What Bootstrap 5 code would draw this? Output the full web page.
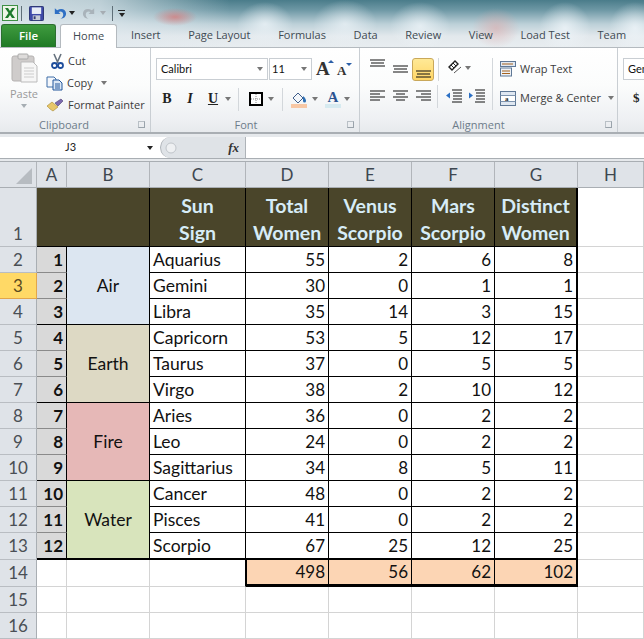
<!DOCTYPE html>
<html lang="en">
<head>
<meta charset="utf-8">
<title>Excel – Sun signs</title>
<link href="https://cdn.jsdelivr.net/npm/bootstrap@5.3.0/dist/css/bootstrap.min.css" rel="stylesheet">
<style>
html,body{width:644px;height:639px;overflow:hidden;background:#fff}
body{font-family:"Open Sans","Liberation Sans",sans-serif;font-size:11px;color:#3b3b3b}
svg{flex:none}
.xl-top{height:47px;background:
 radial-gradient(ellipse 22px 9px at 175px 17px,rgba(214,120,120,.75),transparent),
 radial-gradient(ellipse 28px 22px at 265px 24px,rgba(240,246,250,.75),transparent),
 radial-gradient(ellipse 32px 24px at 345px 24px,rgba(240,246,250,.7),transparent),
 radial-gradient(ellipse 30px 24px at 420px 26px,rgba(240,246,250,.75),transparent),
 radial-gradient(ellipse 24px 20px at 496px 28px,rgba(220,170,170,.6),transparent),
 radial-gradient(ellipse 26px 26px at 565px 28px,rgba(240,246,250,.8),transparent),
 radial-gradient(ellipse 26px 26px at 635px 28px,rgba(240,246,250,.8),transparent),
 linear-gradient(90deg,rgba(225,233,238,.85) 0,rgba(225,233,238,.75) 100px,transparent 230px),
 linear-gradient(180deg,#4a7c8a 0,#6e98a5 10px,#bcd0d8 24px,#e2e8ec 36px,#e8edf0 47px)}
.xl-qat{height:24px;padding:2px 0 0 2px}
.xl-qsep{width:1px;height:15px;background:#5f6f78;flex:none}
.xl-drop{width:0;height:0;border-left:3.5px solid transparent;border-right:3.5px solid transparent;border-top:4px solid #777;flex:none}
.xl-drop-k{border-top-color:#222}
.xl-drop-l{border-top-color:#a6adb3}
.xl-cust{width:7px;height:1px;background:#222;margin-bottom:2px}
.l1{margin-left:1px}.l2{margin-left:2px}.l3{margin-left:3px}.l4{margin-left:4px}.l5{margin-left:5px}.l6{margin-left:6px}.l7{margin-left:7px}.l8{margin-left:8px}.l9{margin-left:9px}.l10{margin-left:10px}
.xl-tabs{height:23px}
.xl-file{width:55px;margin-left:1px;height:23px;line-height:22px;text-align:center;color:#fff;font-weight:600;font-size:11.5px;background:linear-gradient(180deg,#3f9b3f,#1f7a25);border-radius:3px 3px 0 0;border:1px solid #2c6f30;border-bottom:0}
.xl-tab{padding:0 13.8px;line-height:22px;font-size:11px;color:#3f4a52;white-space:nowrap}
.xl-tab-on{background:#fff;border:1px solid #b4babf;border-bottom:0;border-radius:3px 3px 0 0;margin-left:4px;padding:0 12px;height:24px;z-index:1}
.xl-ribbon{height:87px;background:linear-gradient(180deg,#fff 0,#fbfcfc 45%,#eef0f3 85%,#e7eaed 100%);border-top:1px solid #b4babf;border-bottom:2px solid #a9aeb3}
.xl-group{height:84px;position:relative;border-right:1px solid #c9ced3;flex:none}
.xl-g1{width:151px}.xl-g2{width:209px}.xl-g3{width:258px}
.xl-body{height:68px}
.xl-body-font{padding:10px 0 0 5px}
.xl-glabel{height:16px;line-height:17px;text-align:center;color:#6d7c8a;font-size:11px}
.xl-lab-clip{padding-right:22px}.xl-lab-font{padding-right:18px}.xl-lab-align{padding-right:20px}
.xl-launch{position:absolute;right:5px;bottom:4px;width:7px;height:7px;border:1px solid #9aa3ab;border-top-color:#b9c0c6;border-left-color:#b9c0c6}
.xl-paste{width:48px;color:#9a9a9a;padding-top:5px}
.xl-paste span{line-height:13px;margin-top:4px}
.xl-clipcol{padding-top:2px}
.xl-cliprow{height:22px;font-size:11px;color:#3b3b3b;white-space:nowrap}
.xl-clipin{margin-left:-2px}
.xl-combo{height:22px;background:#fff;border:1px solid #c9ced3;font-family:"Lato","Liberation Sans",sans-serif;font-size:11px;color:#111;padding:0 4px}
.xl-combo-name{width:112px}
.xl-combo-size{width:43px;margin-left:1px;padding-left:2px}
.xl-fontrow2{margin-top:7px;height:24px}
.xl-vsep{width:1px;height:23px;background:#d3d7db;flex:none}
.xl-rb{font-family:"Liberation Serif",serif;font-size:14px;font-weight:700;color:#222;line-height:1;width:14px;text-align:center}
.xl-rb-i{font-style:italic}.xl-rb-u{text-decoration:underline}
.xl-bigA{font:700 19px/18px "Liberation Serif",serif;color:#333;position:relative;width:16px;height:18px;text-align:left}
.xl-smA{font:700 13px/14px "Liberation Serif",serif;color:#333;position:relative;width:15px;height:14px;text-align:left;margin-top:3px}
.xl-tri-up{position:absolute;right:-2px;top:0;width:0;height:0;border-left:3px solid transparent;border-right:3px solid transparent;border-bottom:3px solid #2b5fa8}
.xl-tri-dn{position:absolute;right:0;top:-1px;width:0;height:0;border-left:3px solid transparent;border-right:3px solid transparent;border-top:3px solid #2b5fa8}
.xl-fcolor{width:16px}
.xl-fcolor span{font:700 15px/14px "Liberation Serif",serif;color:#2b5392}
.xl-fbar{width:16px;height:4px;background:#d6eaf0}
.xl-acol{padding:10px 0 0 10px;width:132px;flex:none}
.xl-arow1{height:24px}
.xl-arow2{height:24px;margin-top:3px}
.xl-sel{width:22px;height:23px;background:linear-gradient(180deg,#ffe996,#ffd667);border:1px solid #c9a85a;border-radius:3px;padding-bottom:2px;flex:none}
.t1{margin-top:1px}.t2{margin-top:2px}.t4{margin-top:4px}.t5{margin-top:5px}.t7{margin-top:7px}.t8{margin-top:8px}
.xl-asep{height:52px;margin:10px 7px 0 0}
.xl-wcol{padding-top:10px;white-space:nowrap}
.xl-wrow{height:22px;color:#3b3b3b;font-size:11px}
.xl-num{padding:10px 0 0 5px;width:60px}
.xl-combo-num{border-right:0;width:40px}
.xl-dollar{font:700 13px/16px "Liberation Serif",serif;color:#222;margin:10px 0 0 10px}
.xl-strip{height:3px;background:#e6e9ec}
.xl-namebar{height:22px;background:#fff;border-bottom:1px solid #a9aeb3}
.xl-namebox{width:158px;height:21px;color:#222;font-family:"Lato",sans-serif;font-size:11px;padding-left:65px}
.xl-namecaret{position:absolute;left:147px;top:9px}
.xl-fxpill{width:86px;height:21px;background:#dfe3e7;border-left:1px solid #aeb3b8;border-right:1px solid #aeb3b8;border-radius:11px 0 0 11px;padding-right:6px;margin-left:2px}
.xl-fx{font-family:"Liberation Serif",serif;font-style:italic;font-weight:700;font-size:13px;color:#333}
.xl-gap{height:3px;background:#e6e9ec;border-bottom:1px solid #a9aeb3}
.xl-sheet{table-layout:fixed;width:644px;margin:0;border-collapse:separate;border-spacing:0;font-family:"Lato","Liberation Sans",sans-serif;font-size:17.5px;color:#111}
.xl-c37{width:37px}.xl-c30{width:30px}.xl-c83{width:83px}.xl-c96{width:96px}.xl-c66{width:66px}
.xl-sheet td{padding:0 3px;border:0;border-right:1px solid #d4d4d4;border-bottom:1px solid #d4d4d4;line-height:24px;white-space:nowrap;overflow:hidden;background:#fff;box-shadow:none;font-weight:400;vertical-align:middle}
.xl-sheet tr{height:26px}
.xl-sheet tr.xl-rtall{height:59px}
.xl-sheet tr.xl-r27{height:27px}
.xl-sheet .xl-ch{background:#dfe3e8;border-right-color:#b1b5ba;border-bottom-color:#a9aeb3;text-align:center;color:#3e4750;font-size:17px;height:26px}
.xl-sheet .xl-rh{background:#dfe3e8;border-right-color:#a9aeb3;border-bottom-color:#b9bdc2;text-align:center;color:#4a4f55;font-size:17px;padding:0}
.xl-sheet .xl-rh-b{vertical-align:bottom}
.xl-sheet .xl-rh-on{background:#ffd966;border-bottom-color:#e2a64a;border-right-color:#e2a64a;color:#5a4a20}
.xl-sheet .xl-corner{background:#dfe3e8;padding:0;border-right-color:#b1b5ba;border-bottom-color:#a9aeb3}
.xl-sheet .xl-hd{background:#4a452a;color:#d6ecf7;font-weight:700;font-size:19.5px;text-align:center;line-height:27px;border-right:1px solid #000;border-bottom:1px solid #000;white-space:normal;padding:0;vertical-align:bottom}
.xl-sheet .xl-hd-last{border-right:2px solid #000}
.xl-sheet .xl-n{background:#d9d9d9;font-size:17px;font-weight:700;text-align:right;border-right:1px solid #000;border-bottom:1px solid #8a8a8a}
.xl-sheet .xl-nend{border-bottom-color:#000}
.xl-sheet .xl-el{text-align:center;border-right:1px solid #000;border-bottom:1px solid #000}
.xl-sheet .xl-air{background:#dce6f1}
.xl-sheet .xl-earth{background:#ddd9c4}
.xl-sheet .xl-fire{background:#e6b8b7}
.xl-sheet .xl-water{background:#d8e4bc;border-bottom:2px solid #000}
.xl-sheet .xl-d{border-right:1px solid #000;border-bottom:1px solid #000}
.xl-sheet .xl-r{text-align:right;font-size:17px}
.xl-sheet .xl-dl{border-right:2px solid #000}
.xl-sheet .xl-b2{border-bottom:2px solid #000}
.xl-sheet .xl-tot{background:#fcd5b4;text-align:right;font-size:17px;border-bottom:3px solid #000;border-right:1px solid #000;line-height:22px}
.xl-sheet .xl-tot0{border-left:1px solid #000}
.xl-sheet .xl-prev{border-right:1px solid #000}
.xl-sheet .xl-tot.xl-dl{border-right:2px solid #000}
</style>
</head>
<body>
<div class="xl-top">
  <div class="xl-qat d-flex align-items-center">
    <svg width="16" height="16" viewBox="0 0 16 16"><rect x=".5" y=".5" width="15" height="15" fill="#eef5e8" stroke="#3f8f45"/><path d="M3 3h3l2 3 2-3h3l-3.500 5L13 13h-3l-2-3-2 3H3l3.500-5z" fill="#1d7a2c"/></svg>
    <div class="xl-qsep l3"></div>
    <svg class="l7" width="15" height="15" viewBox="0 0 16 16"><rect x=".5" y=".5" width="15" height="15" rx="1" fill="#3d49a8" stroke="#26306f"/><rect x="3" y="1.500" width="10" height="7" fill="#e8edf6"/><rect x="4" y="10" width="8" height="5" fill="#c5cbd6"/><rect x="5" y="11" width="2" height="3" fill="#333a70"/></svg>
    <svg class="l8" width="15" height="15" viewBox="0 0 16 15"><path d="M3 2v6h6L7 6c2-1.500 5-.5 5 2.500 0 2-1 3.500-3 4.500 4 0 6-2.500 6-5.500C15 3 10 1 5.500 4z" fill="#2f6fc4"/></svg>
    <div class="xl-drop xl-drop-k l2"></div>
    <svg class="l7" width="15" height="15" viewBox="0 0 16 15"><path d="M13 2v6H7l2-2C7 4.500 4 5.500 4 8.500c0 2 1 3.500 3 4.500-4 0-6-2.500-6-5.500C1 3 6 1 10.500 4z" fill="#a9b3ba"/></svg>
    <div class="xl-drop xl-drop-l l3"></div>
    <div class="xl-qsep l6"></div>
    <div class="d-flex flex-column align-items-center l5"><div class="xl-cust"></div><div class="xl-drop xl-drop-k"></div></div>
  </div>
  <div class="xl-tabs d-flex">
    <div class="xl-file">File</div>
    <div class="xl-tab xl-tab-on">Home</div>
    <div class="xl-tab">Insert</div>
    <div class="xl-tab">Page Layout</div>
    <div class="xl-tab">Formulas</div>
    <div class="xl-tab">Data</div>
    <div class="xl-tab">Review</div>
    <div class="xl-tab">View</div>
    <div class="xl-tab">Load Test</div>
    <div class="xl-tab">Team</div>
  </div>
</div>

<div class="xl-ribbon d-flex">
  <!-- Clipboard -->
  <div class="xl-group xl-g1">
    <div class="xl-body d-flex">
      <div class="xl-paste d-flex flex-column align-items-center">
        <svg width="27" height="30" viewBox="0 0 27 30"><rect x="1" y="3" width="22" height="25" rx="2" fill="#cfcccb" stroke="#b5b2b1"/><rect x="7" y="1" width="10" height="5" rx="1" fill="#dedcdb" stroke="#aaa"/><path d="M10 9h12l4 4v16H10z" fill="#f6f6f6" stroke="#bbb"/><path d="M13 15h10M13 18h10M13 21h10M13 24h10" stroke="#ccc"/></svg>
        <span>Paste</span>
        <div class="xl-drop xl-drop-l mt-1"></div>
      </div>
      <div class="xl-clipcol d-flex flex-column">
        <div class="xl-cliprow d-flex align-items-center gap-1 l3">
          <svg width="13" height="16" viewBox="0 0 13 16"><path d="M3 1l4 9M10 1L6 10" stroke="#66727e" stroke-width="1.600" fill="none"/><circle cx="3.500" cy="12.500" r="2.500" fill="none" stroke="#1e4d9c" stroke-width="1.800"/><circle cx="9.500" cy="12.500" r="2.500" fill="none" stroke="#1e4d9c" stroke-width="1.800"/></svg>
          <span>Cut</span>
        </div>
        <div class="xl-cliprow xl-clipin d-flex align-items-center gap-1">
          <svg width="17" height="15" viewBox="0 0 17 15"><path d="M1 1h7l2 2v8H1z" fill="#f4f7fb" stroke="#3f6ea8"/><path d="M7 4h6l3 3v7H7z" fill="#dbe7f5" stroke="#23569c"/><path d="M9 8h5M9 10h5M9 12h5" stroke="#23569c"/></svg>
          <span>Copy</span><div class="xl-drop l4"></div>
        </div>
        <div class="xl-cliprow xl-clipin d-flex align-items-center gap-1">
          <svg width="18" height="14" viewBox="0 0 18 14"><path d="M1 8l5-4 6 5-5 4c-2-1-4-3-6-5z" fill="#e8c76a" stroke="#a5862f" stroke-width=".6"/><path d="M9 5l6-4 2 2-5 5z" fill="#7c6ab0" stroke="#4b4070" stroke-width=".6"/></svg>
          <span>Format Painter</span>
        </div>
      </div>
    </div>
    <div class="xl-glabel xl-lab-clip">Clipboard</div>
    <div class="xl-launch"></div>
  </div>

  <!-- Font -->
  <div class="xl-group xl-g2">
    <div class="xl-body xl-body-font d-flex flex-column">
      <div class="d-flex align-items-center">
        <div class="xl-combo xl-combo-name d-flex align-items-center justify-content-between"><span>Calibri</span><div class="xl-drop"></div></div>
        <div class="xl-combo xl-combo-size d-flex align-items-center justify-content-between"><span>11</span><div class="xl-drop"></div></div>
        <div class="xl-bigA l4">A<i class="xl-tri-up"></i></div>
        <div class="xl-smA l5">A<i class="xl-tri-dn"></i></div>
      </div>
      <div class="xl-fontrow2 d-flex align-items-center">
        <div class="xl-rb l4">B</div>
        <div class="xl-rb xl-rb-i l9">I</div>
        <div class="xl-rb xl-rb-u l9">U</div>
        <div class="xl-drop l5"></div>
        <div class="xl-vsep l7"></div>
        <svg class="l10" width="14" height="14" viewBox="0 0 14 14"><rect x="1" y="1" width="12" height="12" fill="#fff" stroke="#000" stroke-width="2"/><path d="M7 2v10M2 7h10" stroke="#888" stroke-dasharray="1 1"/></svg>
        <div class="xl-drop l5"></div>
        <div class="xl-vsep l8"></div>
        <svg class="l8" width="17" height="17" viewBox="0 0 17 17"><path d="M2 7l5-5 5 5-5 5z" fill="#f3f6fa" stroke="#3f5d8a"/><path d="M12 5c2 2 3 3 3 5a1.500 1.500 0 0 1-3 0z" fill="#2d6fb5"/><rect x="0" y="13" width="16" height="4" fill="#f7c7a5"/></svg>
        <div class="xl-drop l4"></div>
        <div class="xl-fcolor d-flex flex-column align-items-center l7">
          <span>A</span>
          <div class="xl-fbar"></div>
        </div>
        <div class="xl-drop l3"></div>
      </div>
    </div>
    <div class="xl-glabel xl-lab-font">Font</div>
    <div class="xl-launch"></div>
  </div>

  <!-- Alignment -->
  <div class="xl-group xl-g3">
    <div class="xl-body d-flex">
      <div class="xl-acol d-flex flex-column">
        <div class="xl-arow1 d-flex align-items-start">
          <svg class="t1" width="15" height="8" viewBox="0 0 15 8"><path d="M0 1h15M1 4h13M0 7h15" stroke="#111" stroke-width="1.200"/></svg>
          <svg class="t7 l8" width="15" height="8" viewBox="0 0 15 8"><path d="M0 1h15M1 4h13M0 7h15" stroke="#111" stroke-width="1.200"/></svg>
          <div class="xl-sel d-flex align-items-end justify-content-center l4"><svg width="15" height="8" viewBox="0 0 15 8"><path d="M0 1h15M1 4h13M0 7h15" stroke="#111" stroke-width="1.200"/></svg></div>
          <div class="xl-vsep l4"></div>
          <svg class="t2 l9" width="15" height="15" viewBox="0 0 15 15"><path d="M1 7l6-6 3 3-6 6z" fill="none" stroke="#222" stroke-width="1.400"/><path d="M3 5l3 3M5 3l3 3" stroke="#222"/><path d="M6 13l7-6" stroke="#555"/></svg>
          <div class="xl-drop t8 l2"></div>
        </div>
        <div class="xl-arow2 d-flex align-items-start">
          <svg class="t5" width="15" height="12" viewBox="0 0 15 12"><path d="M0 1h15M0 4h10M0 7h15M0 10h10" stroke="#111" stroke-width="1.200"/></svg>
          <svg class="t5 l8" width="15" height="12" viewBox="0 0 15 12"><path d="M0 1h15M3 4h9M0 7h15M3 10h9" stroke="#111" stroke-width="1.200"/></svg>
          <svg class="t5 l8" width="15" height="12" viewBox="0 0 15 12"><path d="M0 1h15M5 4h10M0 7h15M5 10h10" stroke="#111" stroke-width="1.200"/></svg>
          <div class="xl-vsep l6"></div>
          <svg class="t4 l8" width="16" height="14" viewBox="0 0 16 14"><path d="M6 1h10M7 4h9M7 7h9M7 10h9M6 13h10" stroke="#111" stroke-width="1.100"/><path d="M0 6.500l4-3v6z" fill="#2b6fc4"/></svg>
          <svg class="t4 l7" width="16" height="14" viewBox="0 0 16 14"><path d="M6 1h10M7 4h9M7 7h9M7 10h9M6 13h10" stroke="#111" stroke-width="1.100"/><path d="M4 6.500l-4-3v6z" fill="#2b6fc4"/></svg>
        </div>
      </div>
      <div class="xl-vsep xl-asep"></div>
      <div class="xl-wcol d-flex flex-column">
        <div class="xl-wrow d-flex align-items-center gap-1">
          <svg width="16" height="16" viewBox="0 0 16 16"><rect x=".5" y=".5" width="15" height="5" fill="#e2e9f2" stroke="#5f7896"/><rect x=".5" y="7" width="11" height="8" fill="#eef2f7" stroke="#5f7896"/><path d="M2 3h11M2 10h8M2 12.500h8" stroke="#a5621f"/></svg>
          <span>Wrap Text</span>
        </div>
        <div class="xl-wrow t7 d-flex align-items-center gap-1">
          <svg width="16" height="15" viewBox="0 0 16 15"><rect x=".5" y=".5" width="15" height="14" fill="#dfe7f1" stroke="#5f7896"/><path d="M.5 4.500h15M.5 10.500h15" stroke="#7d93ad"/><rect x="1" y="5" width="14" height="5" fill="#fff"/><text x="5" y="10" font-family="Liberation Serif" font-weight="700" font-size="7" fill="#222">a</text></svg>
          <span>Merge &amp; Center</span>
          <div class="xl-drop l3"></div>
        </div>
      </div>
    </div>
    <div class="xl-glabel xl-lab-align">Alignment</div>
    <div class="xl-launch"></div>
  </div>

  <!-- Number -->
  <div class="flex-grow-1 overflow-hidden">
    <div class="xl-num d-flex flex-column">
      <div class="xl-combo xl-combo-num d-flex align-items-center"><span>General</span></div>
      <span class="xl-dollar">$</span>
    </div>
  </div>
</div>

<div class="xl-strip"></div>
<div class="xl-namebar d-flex">
  <div class="xl-namebox position-relative d-flex align-items-center"><span>J3</span><div class="xl-drop xl-drop-k xl-namecaret"></div></div>
  <div class="xl-fxpill d-flex align-items-center justify-content-between">
    <svg class="l2" width="16" height="16" viewBox="0 0 16 16"><circle cx="8" cy="8" r="5" fill="#eef0f2" stroke="#c0c5ca"/></svg>
    <span class="xl-fx">fx</span>
  </div>
</div>
<div class="xl-gap"></div>

<table class="table xl-sheet">
<colgroup><col class="xl-c37"><col class="xl-c30"><col class="xl-c83"><col class="xl-c96"><col class="xl-c83"><col class="xl-c83"><col class="xl-c83"><col class="xl-c83"><col class="xl-c66"></colgroup>
<tr>
<td class="xl-corner"><svg class="d-block" width="36" height="25" viewBox="0 0 36 25"><path d="M16 22L32 6v16z" fill="#b7bcc1"/></svg></td>
<td class="xl-ch">A</td><td class="xl-ch">B</td><td class="xl-ch">C</td><td class="xl-ch">D</td><td class="xl-ch">E</td><td class="xl-ch">F</td><td class="xl-ch">G</td><td class="xl-ch">H</td>
</tr>
<tr class="xl-rtall">
<td class="xl-rh xl-rh-b">1</td>
<td class="xl-hd" colspan="2"></td>
<td class="xl-hd">Sun<br>Sign</td><td class="xl-hd">Total<br>Women</td><td class="xl-hd">Venus<br>Scorpio</td><td class="xl-hd">Mars<br>Scorpio</td><td class="xl-hd xl-hd-last">Distinct<br>Women</td><td></td>
</tr>
<tr><td class="xl-rh">2</td><td class="xl-n">1</td><td class="xl-el xl-air" rowspan="3">Air</td><td class="xl-d">Aquarius</td><td class="xl-d xl-r">55</td><td class="xl-d xl-r">2</td><td class="xl-d xl-r">6</td><td class="xl-d xl-r xl-dl">8</td><td></td></tr>
<tr><td class="xl-rh xl-rh-on">3</td><td class="xl-n">2</td><td class="xl-d">Gemini</td><td class="xl-d xl-r">30</td><td class="xl-d xl-r">0</td><td class="xl-d xl-r">1</td><td class="xl-d xl-r xl-dl">1</td><td></td></tr>
<tr><td class="xl-rh">4</td><td class="xl-n xl-nend">3</td><td class="xl-d">Libra</td><td class="xl-d xl-r">35</td><td class="xl-d xl-r">14</td><td class="xl-d xl-r">3</td><td class="xl-d xl-r xl-dl">15</td><td></td></tr>
<tr><td class="xl-rh">5</td><td class="xl-n">4</td><td class="xl-el xl-earth" rowspan="3">Earth</td><td class="xl-d">Capricorn</td><td class="xl-d xl-r">53</td><td class="xl-d xl-r">5</td><td class="xl-d xl-r">12</td><td class="xl-d xl-r xl-dl">17</td><td></td></tr>
<tr><td class="xl-rh">6</td><td class="xl-n">5</td><td class="xl-d">Taurus</td><td class="xl-d xl-r">37</td><td class="xl-d xl-r">0</td><td class="xl-d xl-r">5</td><td class="xl-d xl-r xl-dl">5</td><td></td></tr>
<tr><td class="xl-rh">7</td><td class="xl-n xl-nend">6</td><td class="xl-d">Virgo</td><td class="xl-d xl-r">38</td><td class="xl-d xl-r">2</td><td class="xl-d xl-r">10</td><td class="xl-d xl-r xl-dl">12</td><td></td></tr>
<tr><td class="xl-rh">8</td><td class="xl-n">7</td><td class="xl-el xl-fire" rowspan="3">Fire</td><td class="xl-d">Aries</td><td class="xl-d xl-r">36</td><td class="xl-d xl-r">0</td><td class="xl-d xl-r">2</td><td class="xl-d xl-r xl-dl">2</td><td></td></tr>
<tr><td class="xl-rh">9</td><td class="xl-n">8</td><td class="xl-d">Leo</td><td class="xl-d xl-r">24</td><td class="xl-d xl-r">0</td><td class="xl-d xl-r">2</td><td class="xl-d xl-r xl-dl">2</td><td></td></tr>
<tr><td class="xl-rh">10</td><td class="xl-n xl-nend">9</td><td class="xl-d">Sagittarius</td><td class="xl-d xl-r">34</td><td class="xl-d xl-r">8</td><td class="xl-d xl-r">5</td><td class="xl-d xl-r xl-dl">11</td><td></td></tr>
<tr><td class="xl-rh">11</td><td class="xl-n">10</td><td class="xl-el xl-water" rowspan="3">Water</td><td class="xl-d">Cancer</td><td class="xl-d xl-r">48</td><td class="xl-d xl-r">0</td><td class="xl-d xl-r">2</td><td class="xl-d xl-r xl-dl">2</td><td></td></tr>
<tr><td class="xl-rh">12</td><td class="xl-n">11</td><td class="xl-d">Pisces</td><td class="xl-d xl-r">41</td><td class="xl-d xl-r">0</td><td class="xl-d xl-r">2</td><td class="xl-d xl-r xl-dl">2</td><td></td></tr>
<tr class="xl-r27"><td class="xl-rh">13</td><td class="xl-n xl-b2">12</td><td class="xl-d xl-b2">Scorpio</td><td class="xl-d xl-r xl-b2">67</td><td class="xl-d xl-r xl-b2">25</td><td class="xl-d xl-r xl-b2">12</td><td class="xl-d xl-r xl-dl xl-b2">25</td><td></td></tr>
<tr class="xl-r27"><td class="xl-rh">14</td><td></td><td></td><td class="xl-prev"></td><td class="xl-tot xl-tot0">498</td><td class="xl-tot">56</td><td class="xl-tot">62</td><td class="xl-tot xl-dl">102</td><td></td></tr>
<tr><td class="xl-rh">15</td><td></td><td></td><td></td><td></td><td></td><td></td><td></td><td></td></tr>
<tr><td class="xl-rh">16</td><td></td><td></td><td></td><td></td><td></td><td></td><td></td><td></td></tr>
</table>
</body>
</html>
